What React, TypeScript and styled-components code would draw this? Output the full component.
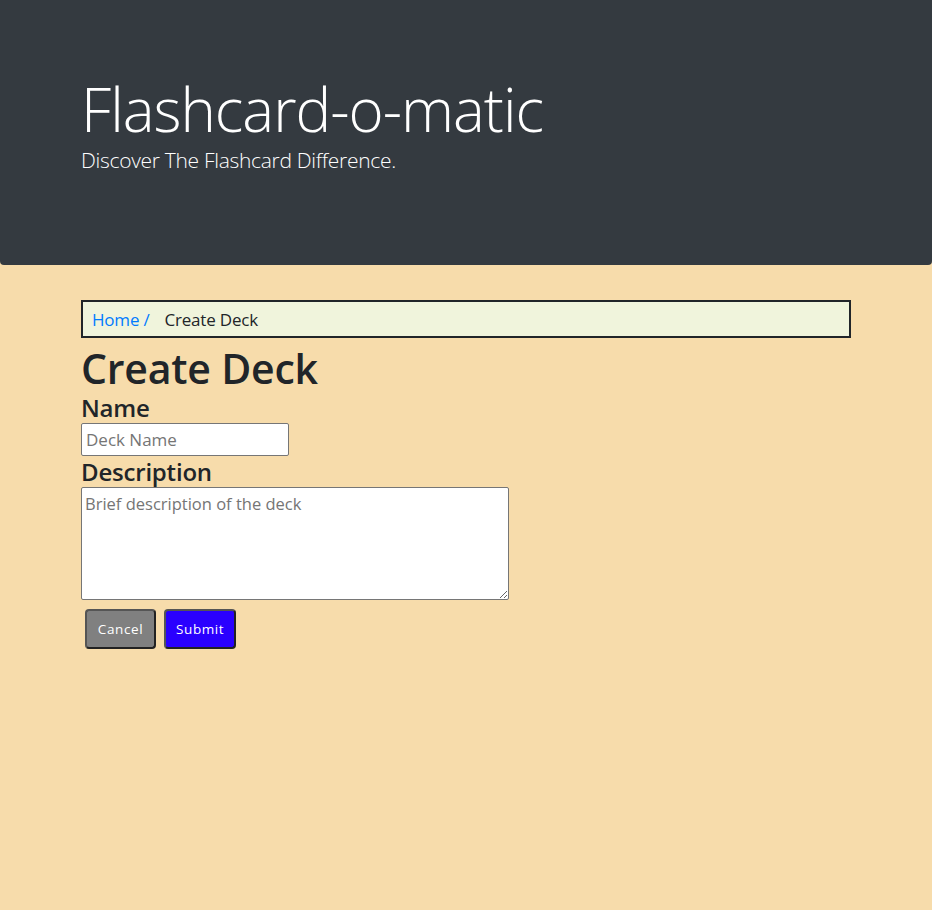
import React from 'react';
import styled, { createGlobalStyle } from 'styled-components';

const GlobalStyle = createGlobalStyle`
  html, body {
    margin: 0;
    padding: 0;
    background-color: #f7dcab;
    font-family: "Open Sans", "Noto Sans", sans-serif;
    color: #212529;
  }
`;

const Page = styled.div`
  min-height: 910px;
  background-color: #f7dcab;
`;

const Jumbotron = styled.header`
  box-sizing: border-box;
  height: 265px;
  padding: 73px 81px 0;
  background-color: #343a40;
  border-radius: 0 0 4px 4px;
  color: #fff;
`;

const Title = styled.h1`
  margin: 0;
  font-size: 60px;
  font-weight: 300;
  line-height: 72px;
  letter-spacing: -1px;
`;

const Lead = styled.p`
  margin: 1px 0 0;
  font-size: 21px;
  font-weight: 300;
  line-height: 1.4;
  letter-spacing: -0.3px;
`;

const Main = styled.main`
  padding: 35px 81px 0;
`;

const Breadcrumb = styled.nav`
  box-sizing: border-box;
  display: flex;
  align-items: center;
  gap: 15px;
  height: 38px;
  padding: 0 9px;
  background-color: #f0f4dc;
  border: 2px solid #212529;
  font-size: 17px;
  letter-spacing: -0.2px;
`;

const Crumb = styled.a`
  color: #007bff;
  text-decoration: none;
`;

const Current = styled.span`
  color: #212529;
`;

const Heading = styled.h2`
  margin: 6px 0 0;
  font-size: 41px;
  font-weight: 600;
  line-height: 48px;
  letter-spacing: -0.2px;
`;

const Form = styled.form`
  display: flex;
  flex-direction: column;
  align-items: flex-start;
`;

const Label = styled.label`
  font-size: 24px;
  font-weight: 600;
  line-height: 31px;
  letter-spacing: -0.2px;
`;

const Input = styled.input`
  box-sizing: border-box;
  width: 208px;
  height: 33px;
  padding: 2px 4px;
  border: 1px solid #767676;
  border-radius: 2px;
  background: #fff;
  font-family: inherit;
  font-size: 17px;

  &::placeholder {
    color: #757575;
  }
`;

const TextArea = styled.textarea`
  box-sizing: border-box;
  width: 428px;
  height: 113px;
  padding: 4px 3px;
  border: 1px solid #767676;
  border-radius: 2px;
  background: #fff;
  font-family: inherit;
  font-size: 16.5px;
  line-height: 1.4;
  resize: both;

  &::placeholder {
    color: #757575;
  }
`;

const Buttons = styled.div`
  display: flex;
  gap: 8px;
  margin: 9px 0 0 4px;
`;

const Button = styled.button<{ $tone: 'gray' | 'blue' }>`
  box-sizing: border-box;
  height: 40px;
  padding: 0 10px;
  border: 2px solid;
  border-color: #555 #222 #222 #555;
  border-radius: 4px;
  background-color: ${(p) => (p.$tone === 'blue' ? '#2a00ff' : '#808080')};
  color: #fff;
  font-family: inherit;
  font-size: 13.5px;
  letter-spacing: 0.6px;
  cursor: pointer;
`;

export default function App() {
  return (
    <Page>
      <GlobalStyle />
      <Jumbotron>
        <Title>Flashcard-o-matic</Title>
        <Lead>Discover The Flashcard Difference.</Lead>
      </Jumbotron>
      <Main>
        <Breadcrumb>
          <Crumb href="#">Home /</Crumb>
          <Current>Create Deck</Current>
        </Breadcrumb>
        <Heading>Create Deck</Heading>
        <Form onSubmit={(e) => e.preventDefault()}>
          <Label htmlFor="name">Name</Label>
          <Input id="name" placeholder="Deck Name" />
          <Label htmlFor="description">Description</Label>
          <TextArea id="description" placeholder="Brief description of the deck" />
          <Buttons>
            <Button type="button" $tone="gray" style={{ width: 71 }}>
              Cancel
            </Button>
            <Button type="submit" $tone="blue" style={{ width: 72 }}>
              Submit
            </Button>
          </Buttons>
        </Form>
      </Main>
    </Page>
  );
}
